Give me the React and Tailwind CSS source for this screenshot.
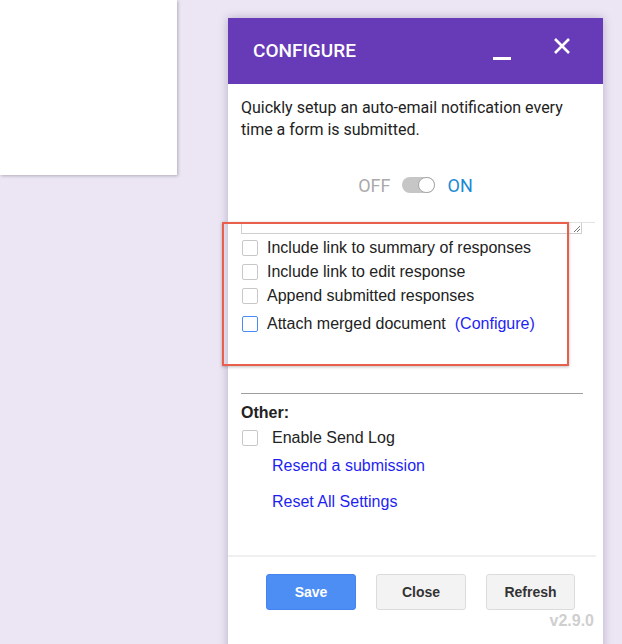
import React from "react";

const sans = { fontFamily: '"Liberation Sans", Arial, sans-serif' };
const roboto = { fontFamily: 'Roboto, "Liberation Sans", sans-serif' };

const Box = ({ blue }) => (
  <span
    className={
      "block w-[16px] h-[16px] shrink-0 rounded-[2px] border bg-white " +
      (blue ? "border-[#4a8cf7]" : "border-[#c8c8c8]")
    }
  />
);

const CheckRow = ({ label, blue, extra, className = "" }) => (
  <div className={"flex items-center h-[24px] " + className}>
    <span className="ml-[1px]">
      <Box blue={blue} />
    </span>
    <span className="ml-[9px] text-[16px] text-[#222]">{label}</span>
    {extra}
  </div>
);

const App = () => {
  return (
    <div
      className="w-[622px] h-[644px] overflow-hidden bg-[#ece6f4] flex items-start"
      style={sans}
    >
      {/* page card behind the dialog */}
      <div className="w-[177px] h-[175px] bg-white shadow-[1px_1px_3px_rgba(0,0,0,0.25)] shrink-0" />

      {/* dialog */}
      <div className="relative ml-[51px] mt-[18px] w-[375px] h-[640px] bg-white shadow-[0_0_9px_rgba(60,40,90,0.3)] shrink-0">
        <div className="h-[66px] bg-[#673ab7] flex items-center pl-[25px] pr-[32px]">
          <span className="text-white text-[19px] font-medium" style={roboto}>
            CONFIGURE
          </span>
          <span className="ml-auto mt-[14px] block w-[18px] h-[3px] bg-white" />
          <svg width="18" height="18" viewBox="0 0 18 18" className="ml-[42px] mb-[10px]">
            <path d="M2 2 L16 16 M16 2 L2 16" stroke="white" strokeWidth="2.6" />
          </svg>
        </div>

        <div className="px-[13px]">
          <p className="pt-[13px] text-[16px] leading-[22px] text-[#222]" style={roboto}>
            Quickly setup an auto-email notification every time a form is submitted.
          </p>

          <div className="mt-[33px] h-[22px] flex items-center justify-center" style={roboto}>
            <span className="text-[18px] text-[#aaa]">OFF</span>
            <span className="ml-[11px] relative block w-[33px] h-[16px] rounded-full bg-[#c6c6c6]">
              <span className="absolute right-0 top-0 block w-[17px] h-[16px] rounded-full bg-white border border-[#a8a8a8]" />
            </span>
            <span className="ml-[13px] text-[18px] text-[#1a8ad4]">ON</span>
          </div>

          {/* scroll area */}
          <div className="mt-[26px] mr-[-5px] border-t border-[#e2e2e2]">
            <div className="relative mr-[13px] h-[11px] border-l border-r border-b border-[#cfcfcf]">
              <svg width="7" height="7" viewBox="0 0 7 7" className="absolute right-[1px] bottom-[1px]">
                <path d="M1 7 L7 1 M4 7 L7 4" stroke="#777" strokeWidth="1" />
              </svg>
            </div>
            <div className="mt-[2px]">
              <CheckRow label="Include link to summary of responses" />
              <CheckRow label="Include link to edit response" />
              <CheckRow label="Append submitted responses" />
              <CheckRow
                className="mt-[4px]"
                blue
                label="Attach merged document"
                extra={<span className="ml-[9px] text-[16px] text-[#1f1ff2]">(Configure)</span>}
              />
            </div>
          </div>

          <div className="mt-[57px] mr-[7px] border-t border-[#9e9e9e]" />

          <div className="mt-[9px] h-[20px] leading-[20px] text-[16px] font-bold text-[#222]">
            Other:
          </div>
          <div className="mt-[3px] flex items-center h-[24px]">
            <span className="ml-[1px]">
              <Box />
            </span>
            <span className="ml-[14px] text-[16px] text-[#222]">Enable Send Log</span>
          </div>
          <div className="mt-[6px] ml-[31px] h-[20px] leading-[20px] text-[16px] text-[#1f1ff2]">
            Resend a submission
          </div>
          <div className="mt-[16px] ml-[31px] h-[20px] leading-[20px] text-[16px] text-[#1f1ff2]">
            Reset All Settings
          </div>
        </div>

        <div className="mt-[43px] mr-[7px] border-t-2 border-[#f0f0f0]" />

        <div className="mt-[17px] pl-[38px] flex gap-[20px]">
          <button className="w-[90px] h-[36px] rounded-[3px] bg-[#4d8ef5] border border-[#4584ee] text-white text-[14px] font-bold">
            Save
          </button>
          <button className="w-[90px] h-[36px] rounded-[3px] bg-[#f3f3f3] border border-[#dcdcdc] text-[#333] text-[14px] font-bold">
            Close
          </button>
          <button className="w-[89px] h-[36px] rounded-[3px] bg-[#f3f3f3] border border-[#dcdcdc] text-[#333] text-[14px] font-bold">
            Refresh
          </button>
        </div>

        <div className="pr-[9px] text-right text-[16px] leading-[22px] font-bold text-[#cfcfcf]">
          v2.9.0
        </div>

        {/* red annotation box */}
        <div className="absolute left-[-6px] top-[204px] w-[347px] h-[144px] border-2 border-[#e8604c] shadow-[0_1px_3px_rgba(0,0,0,0.25)] pointer-events-none" />
      </div>
    </div>
  );
};

export default App;
